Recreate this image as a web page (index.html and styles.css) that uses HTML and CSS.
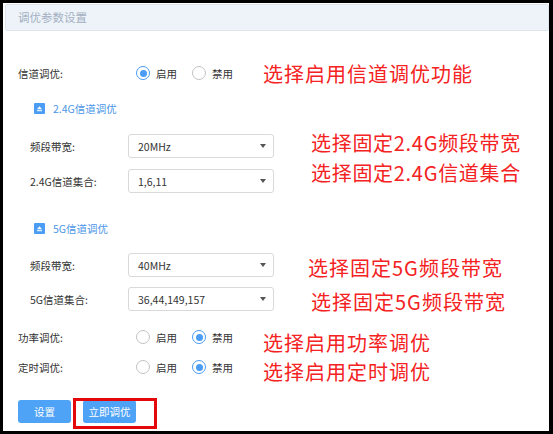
FILE: index.html
```html
<!DOCTYPE html>
<html lang="zh-CN">
<head>
<meta charset="utf-8">
<title>调优参数设置</title>
<link rel="stylesheet" href="styles.css">
</head>
<body>
<div class="screen">
  <div class="page">
    <div class="header">调优参数设置</div>
    <div class="form">
      <div class="row r1">
        <div class="label">信道调优:</div>
        <label class="opt"><span class="radio on"></span>启用</label>
        <label class="opt"><span class="radio"></span>禁用</label>
      </div>

      <div class="section s1">
        <span class="sicon"><svg width="11" height="11" viewBox="0 0 11 11"><path d="M5.5 3.3 L8 6.3 L3 6.3 Z" fill="#fff"/><rect x="3" y="7.2" width="5" height="1" fill="#fff"/></svg></span>
        <span class="stitle">2.4G信道调优</span>
      </div>
      <div class="row sel r3">
        <div class="label">频段带宽:</div>
        <div class="select"><span>20MHz</span><i class="caret"></i></div>
      </div>
      <div class="row sel r4">
        <div class="label">2.4G信道集合:</div>
        <div class="select"><span>1,6,11</span><i class="caret"></i></div>
      </div>

      <div class="section s2">
        <span class="sicon"><svg width="11" height="11" viewBox="0 0 11 11"><path d="M5.5 3.3 L8 6.3 L3 6.3 Z" fill="#fff"/><rect x="3" y="7.2" width="5" height="1" fill="#fff"/></svg></span>
        <span class="stitle">5G信道调优</span>
      </div>
      <div class="row sel r6">
        <div class="label">频段带宽:</div>
        <div class="select"><span>40MHz</span><i class="caret"></i></div>
      </div>
      <div class="row sel r7">
        <div class="label">5G信道集合:</div>
        <div class="select"><span>36,44,149,157</span><i class="caret"></i></div>
      </div>

      <div class="row r8">
        <div class="label">功率调优:</div>
        <label class="opt"><span class="radio"></span>启用</label>
        <label class="opt"><span class="radio on"></span>禁用</label>
      </div>
      <div class="row r9">
        <div class="label">定时调优:</div>
        <label class="opt"><span class="radio"></span>启用</label>
        <label class="opt"><span class="radio on"></span>禁用</label>
      </div>

      <div class="buttons">
        <button class="btn">设置</button>
        <button class="btn">立即调优</button>
      </div>
    </div>
  </div>

  <div class="note n1">选择启用信道调优功能</div>
  <div class="note n2 tight">选择固定2.4G频段带宽</div>
  <div class="note n3 tight">选择固定2.4G信道集合</div>
  <div class="note n4">选择固定5G频段带宽</div>
  <div class="note n5">选择固定5G频段带宽</div>
  <div class="note n6">选择启用功率调优</div>
  <div class="note n7">选择启用定时调优</div>
  <div class="redbox"></div>
</div>
</body>
</html>
```

FILE: styles.css
```css
html, body {
  margin: 0;
  padding: 0;
  background: #000;
}
.screen {
  position: relative;
  width: 553px;
  height: 434px;
  box-sizing: border-box;
  padding: 3px 4px 3px 3px;
  background: #000;
  font-family: "Noto Sans CJK SC", "Noto Sans", sans-serif;
}
.page {
  background: #fff;
  height: 100%;
  overflow: hidden;
}
.header {
  margin: 1px 0 0 2px;
  height: 27px;
  box-sizing: border-box;
  background: #eef3fa;
  border: 1px solid #dfe6f0;
  border-radius: 2px;
  color: #a3b0c2;
  font-size: 11.5px;
  line-height: 25px;
  padding-left: 12px;
}
.form {
  padding-left: 15px;
}
.row {
  display: flex;
  align-items: center;
  height: 24px;
  font-size: 10.5px;
  color: #333;
}
.label {
  width: 118px;
  flex: none;
}
.row.sel {
  padding-left: 12px;
}
.row.sel .label {
  width: 98px;
}
.opt {
  display: flex;
  align-items: center;
  width: 41px;
  margin-right: 15px;
}
.radio {
  width: 14px;
  height: 14px;
  box-sizing: border-box;
  border: 1px solid #c4c4c4;
  border-radius: 50%;
  margin-right: 6px;
  background: #fff;
  display: flex;
  align-items: center;
  justify-content: center;
}
.radio.on {
  border-color: #4a9cf4;
}
.radio.on::after {
  content: "";
  width: 7px;
  height: 7px;
  border-radius: 50%;
  background: #4a9cf4;
}
.select {
  width: 146px;
  height: 24px;
  box-sizing: border-box;
  border: 1px solid #d9d9d9;
  border-radius: 3px;
  display: flex;
  align-items: center;
  justify-content: space-between;
  padding: 0 7px 0 9px;
  font-size: 10.5px;
  color: #333;
}
.caret {
  width: 0;
  height: 0;
  border-left: 3.5px solid transparent;
  border-right: 3.5px solid transparent;
  border-top: 4px solid #555;
}
.section {
  display: flex;
  align-items: center;
  height: 24px;
  padding-left: 16px;
}
.sicon {
  width: 11px;
  height: 11px;
  border-radius: 1px;
  background: #4a9cf4;
  display: flex;
  margin-right: 8px;
}
.stitle {
  color: #4b95e8;
  font-size: 10.5px;
}
.r1 { margin-top: 30px; }
.s1 { margin-top: 11px; }
.r3 { margin-top: 14px; }
.r4 { margin-top: 11px; }
.s2 { margin-top: 23px; }
.r6 { margin-top: 13px; }
.r7 { margin-top: 10px; }
.r8 { margin-top: 14px; }
.r9 { margin-top: 6px; }
.buttons {
  display: flex;
  gap: 12px;
  margin-top: 21px;
}
.btn {
  width: 53px;
  height: 23px;
  border: none;
  border-radius: 3px;
  background: #4ea3f6;
  color: #fff;
  font-family: "Noto Sans CJK SC", sans-serif;
  font-size: 10.5px;
  padding: 0;
}
.note {
  position: absolute;
  color: #f42222;
  font-size: 20px;
  letter-spacing: 1px;
  line-height: 24px;
  white-space: nowrap;
}
.note.tight {
  letter-spacing: 0.7px;
}
.n1 { left: 263px; top: 62px; }
.n2 { left: 311px; top: 131px; }
.n3 { left: 311px; top: 161px; }
.n4 { left: 308px; top: 256px; }
.n5 { left: 311px; top: 290px; }
.n6 { left: 263px; top: 331px; }
.n7 { left: 263px; top: 360px; }
.redbox {
  position: absolute;
  left: 73px;
  top: 398px;
  width: 84px;
  height: 31px;
  box-sizing: border-box;
  border: 3px solid #e4080a;
}
```
